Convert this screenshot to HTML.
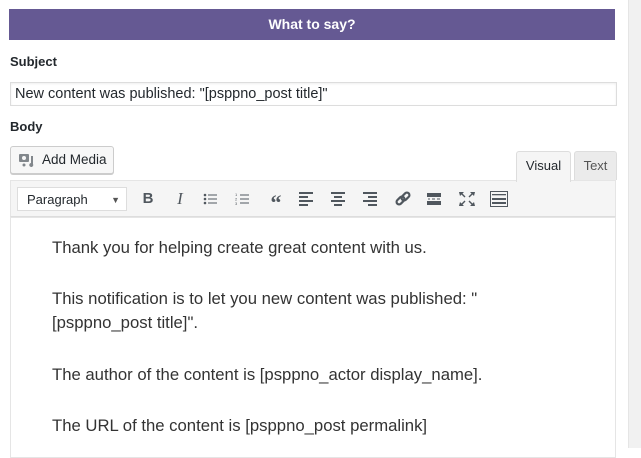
<!DOCTYPE html>
<html><head><style>
body{margin:0;width:641px;height:448px;overflow:hidden;background:#fff;font-family:"Liberation Sans",sans-serif;position:relative;color:#23282d}
.a{position:absolute}
.bar{left:9px;top:9px;width:606px;height:31px;background:#655993;color:#fff;font-weight:bold;font-size:14px;text-align:center;line-height:31px}
.side{left:628px;top:0;width:13px;height:448px;background:#f1f1f1;border-left:1px solid #e5e5e5}
.lbl{font-size:13px;font-weight:bold;left:10px}
.inp{left:10px;top:82px;width:601px;height:22px;border:1px solid #ddd;font-size:14.5px;line-height:22px;padding-left:4px;box-sizing:content-box;box-shadow:inset 0 1px 2px rgba(0,0,0,.07);white-space:nowrap}
.btn{left:10px;top:146px;width:102px;height:26px;border:1px solid #ccc;border-radius:3px;background:#f7f7f7;font-size:13.5px;line-height:25px;box-shadow:0 1px 0 #ccc;white-space:nowrap}
.tab{font-size:13px;line-height:28px;text-align:center;border:1px solid #ddd;border-bottom:none;border-radius:3px 3px 0 0}
.tb{left:10px;top:180px;width:604px;height:36px;background:#f5f5f5;border:1px solid #e5e5e5}
.ed{left:10px;top:216px;width:604px;height:240px;border:1px solid #e5e5e5;border-top:1px solid #ddd}
.sel{left:6px;top:6px;width:110px;height:24px;background:#fff;border:1px solid #ddd;font-size:13px;line-height:24px;padding-left:9px;box-sizing:border-box}
.ic{top:8px;width:20px;height:20px;color:#50575e;font-size:16px;text-align:center;line-height:20px}
p{position:absolute;left:52px;margin:0;font-size:16.7px;color:#333;line-height:24px;white-space:nowrap}
</style></head><body>
<div class="a side"></div>
<div class="a bar">What to say?</div>
<div class="a lbl" style="top:54px">Subject</div>
<div class="a inp">New content was published: "[psppno_post title]"</div>
<div class="a lbl" style="top:119px">Body</div>
<div class="a btn"><svg class="a" style="left:8px;top:6px" width="16" height="14" viewBox="0 0 16 14"><rect x="0" y="1" width="10" height="8" rx="1" fill="#82878c"/><circle cx="5" cy="5" r="2" fill="#f7f7f7"/><path d="M12 3h2v8a2 2 0 1 1-2-1z" fill="#82878c"/><circle cx="5" cy="12" r="1.5" fill="#82878c"/></svg><span class="a" style="left:31px;top:0">Add Media</span></div>
<div class="a tab" style="left:516px;top:151px;width:53px;height:30px;background:#f5f5f5;z-index:2">Visual</div>
<div class="a tab" style="left:574px;top:151px;width:41px;height:28px;background:#ebebeb;color:#555">Text</div>
<div class="a tb">
<div class="a sel">Paragraph<span class="a" style="right:6px;top:0;font-size:9px;color:#555">▼</span></div>
<div class="a ic" style="left:127px;font-weight:bold;font-size:15px">B</div>
<div class="a ic" style="left:159px;font-style:italic;font-family:'Liberation Serif';font-size:17px">I</div>
<svg class="a" style="left:192px;top:12px" width="16" height="12"><g fill="#50575e"><circle cx="2" cy="2" r="1.3"/><circle cx="2" cy="6" r="1.3"/><circle cx="2" cy="10" r="1.3"/><rect x="5" y="1.5" width="9" height="1"/><rect x="5" y="5.5" width="9" height="1"/><rect x="5" y="9.5" width="9" height="1"/></g></svg>
<svg class="a" style="left:224px;top:11px" width="16" height="14"><g fill="#50575e"><text x="0" y="4" font-size="4">1</text><text x="0" y="8.5" font-size="4">2</text><text x="0" y="13" font-size="4">3</text><rect x="5" y="2.5" width="9" height="1"/><rect x="5" y="6.5" width="9" height="1"/><rect x="5" y="10.5" width="9" height="1"/></g></svg>
<div class="a ic" style="left:255px;font-weight:bold;font-size:22px;line-height:28px;font-family:'Liberation Serif'">“</div>
<svg class="a" style="left:288px;top:11px" width="14" height="14"><g fill="#50575e"><rect y="0" width="14" height="2"/><rect y="4" width="9" height="2"/><rect y="8" width="14" height="2"/><rect y="12" width="9" height="2"/></g></svg>
<svg class="a" style="left:320px;top:11px" width="14" height="14"><g fill="#50575e"><rect y="0" width="14" height="2"/><rect x="3" y="4" width="8" height="2"/><rect y="8" width="14" height="2"/><rect x="3" y="12" width="8" height="2"/></g></svg>
<svg class="a" style="left:352px;top:11px" width="14" height="14"><g fill="#50575e"><rect y="0" width="14" height="2"/><rect x="5" y="4" width="9" height="2"/><rect y="8" width="14" height="2"/><rect x="5" y="12" width="9" height="2"/></g></svg>
<svg class="a" style="left:384px;top:10px" width="16" height="16"><g fill="none" stroke="#50575e" stroke-width="2.2"><rect x="1" y="7" width="9" height="5" rx="2.5" transform="rotate(-45 5.5 9.5)"/><rect x="6" y="3" width="9" height="5" rx="2.5" transform="rotate(-45 10.5 5.5)"/></g></svg>
<svg class="a" style="left:416px;top:12px" width="14" height="12"><g fill="#50575e"><rect width="14" height="4"/><rect y="8" width="14" height="4"/><rect x="1" y="5.5" width="2" height="1"/><rect x="5" y="5.5" width="3" height="1"/><rect x="10" y="5.5" width="3" height="1"/></g></svg>
<svg class="a" style="left:448px;top:11px" width="16" height="14"><g fill="#50575e"><path d="M0 0h5l-1.5 1.5 3 3-1 1-3-3L1 4z"/><path d="M16 0h-5l1.5 1.5-3 3 1 1 3-3L15 4z"/><path d="M0 14h5l-1.5-1.5 3-3-1-1-3 3L1 10z"/><path d="M16 14h-5l1.5-1.5-3-3 1-1 3 3L15 10z"/></g></svg>
<svg class="a" style="left:479px;top:10px" width="18" height="16"><rect x=".5" y=".5" width="17" height="15" fill="none" stroke="#50575e"/><g fill="#50575e"><rect x="2" y="3" width="14" height="1.3"/><rect x="2" y="7" width="14" height="2"/><rect x="2" y="11" width="14" height="2"/></g></svg>
</div>
<div class="a ed"></div>
<p style="top:236px">Thank you for helping create great content with us.</p>
<p style="top:287px">This notification is to let you new content was published: "<br>[psppno_post title]".</p>
<p style="top:363px">The author of the content is [psppno_actor display_name].</p>
<p style="top:414px">The URL of the content is [psppno_post permalink]</p>
</body></html>
